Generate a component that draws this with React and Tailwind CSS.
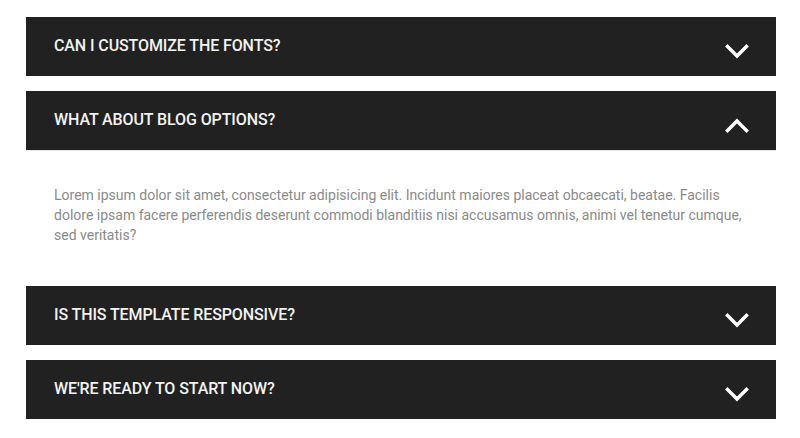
import React, { useState } from 'react';

const faqs = [
  { q: 'CAN I CUSTOMIZE THE FONTS?', a: '' },
  {
    q: 'WHAT ABOUT BLOG OPTIONS?',
    a: 'Lorem ipsum dolor sit amet, consectetur adipisicing elit. Incidunt maiores placeat obcaecati, beatae. Facilis dolore ipsam facere perferendis deserunt commodi blanditiis nisi accusamus omnis, animi vel tenetur cumque, sed veritatis?',
  },
  { q: 'IS THIS TEMPLATE RESPONSIVE?', a: '' },
  { q: "WE'RE READY TO START NOW?", a: '' },
];

const Chevron = ({ up }) => (
  <svg width="24" height="15" viewBox="0 0 24 15" className="mt-[9px]">
    <path
      d={up ? 'M2.5 12.5 L12 3 L21.5 12.5' : 'M2.5 2.5 L12 12 L21.5 2.5'}
      fill="none"
      stroke="#ffffff"
      strokeWidth="3.4"
      strokeLinecap="square"
    />
  </svg>
);

const App = () => {
  const [open, setOpen] = useState(1);

  return (
    <div className="w-[800px] h-[438px] bg-white pt-[17px] pl-[26px] pr-[24px] font-['Roboto',sans-serif]">
      {faqs.map((item, i) => (
        <div key={i} className={i === open ? 'mb-0' : 'mb-[15px]'}>
          <button
            onClick={() => setOpen(open === i ? -1 : i)}
            className="w-full h-[59px] bg-[#212121] flex items-center justify-between pl-[28px] pr-[27px] text-left"
          >
            <span className="text-[16px] font-medium text-[#f2f2f2] tracking-[-0.1px] -mt-[1px]">{item.q}</span>
            <Chevron up={i === open} />
          </button>
          {i === open && (
            <div className="border-t border-[#e6e6e6] pt-[34px] pb-[41px] pl-[28px] pr-[26px]">
              <p className="text-[14px] leading-[20px] text-[#8a8a8a]">{item.a}</p>
            </div>
          )}
        </div>
      ))}
    </div>
  );
};

export default App;
